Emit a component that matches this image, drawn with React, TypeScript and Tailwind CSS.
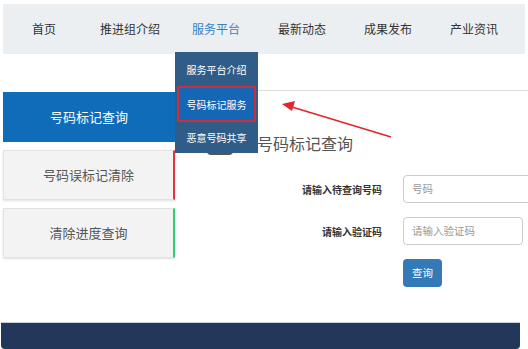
import React from "react";

const navItems = ["首页", "推进组介绍", "服务平台", "最新动态", "成果发布", "产业资讯"];

export default function App() {
  return (
    <div
      className="relative flex h-[349px] w-[528px] flex-col overflow-hidden bg-white"
      style={{ fontFamily: '"Noto Sans CJK SC", "Noto Sans", sans-serif' }}
    >
      {/* Top nav */}
      <div className="px-[3px] pt-[4px]">
        <nav className="flex h-[50px] items-center bg-[#eceff2]">
          <div className="ml-[-2px] flex">
            {navItems.map((item) => (
              <div
                key={item}
                className={`w-[86px] text-center text-[12px] ${
                  item === "服务平台" ? "text-[#3a7fc1]" : "text-[#333]"
                }`}
              >
                {item}
              </div>
            ))}
          </div>
        </nav>
      </div>

      {/* Body */}
      <div className="mt-[36px] flex">
        <aside className="ml-[3px] mt-[2px] flex w-[172px] shrink-0 flex-col gap-[8px]">
          <div className="flex h-[50px] items-center justify-center bg-[#0f6cb9] text-[13px] text-white">
            号码标记查询
          </div>
          <div className="flex h-[50px] items-center justify-center border border-r-2 border-[#e2e2e2] border-r-[#e8323f] bg-[#f3f3f3] text-[13px] text-[#555] shadow-[0_1px_2px_rgba(0,0,0,0.12)]">
            号码误标记清除
          </div>
          <div className="flex h-[50px] items-center justify-center border border-r-2 border-[#e2e2e2] border-r-[#2ecc71] bg-[#f3f3f3] text-[13px] text-[#555] shadow-[0_1px_2px_rgba(0,0,0,0.12)]">
            清除进度查询
          </div>
        </aside>

        <main className="flex-1 border-t border-[#dcdcdc] pt-[40px]">
          <div className="flex items-center pl-[32px]">
            <div className="h-[24px] w-[26px] rounded-[4px] bg-[#555]" />
            <h2 className="ml-[24px] text-[16px] leading-[24px] text-[#555]">号码标记查询</h2>
          </div>

          <div className="mt-[20px] flex flex-col gap-[14px]">
            <div className="flex items-center">
              <label className="w-[207px] shrink-0 text-right text-[10px] font-bold text-[#333]">请输入待查询号码</label>
              <div className="ml-[21px] flex h-[28px] w-[130px] shrink-0 items-center rounded-[4px] border border-[#ccc] pl-[8px] text-[10.5px] text-[#999]">
                号码
              </div>
            </div>
            <div className="flex items-center">
              <label className="w-[207px] shrink-0 text-right text-[10px] font-bold text-[#333]">请输入验证码</label>
              <div className="ml-[21px] flex h-[28px] w-[120px] shrink-0 items-center rounded-[4px] border border-[#ccc] pl-[8px] text-[10.5px] text-[#999]">
                请输入验证码
              </div>
            </div>
            <div className="flex">
              <button className="ml-[228px] h-[28px] w-[39px] shrink-0 rounded-[4px] bg-[#337ab7] text-[10.5px] text-white">
                查询
              </button>
            </div>
          </div>
        </main>
      </div>

      {/* Footer */}
      <footer className="mx-[1px] mt-auto h-[27px] w-[519px] rounded-b-[4px] border-t border-[#c9d0da] bg-[#22375a]" />

      {/* Dropdown menu */}
      <div className="absolute left-[175px] top-[52px] flex w-[83px] flex-col bg-[#2f5d87] text-[10px] text-white">
        <div className="flex h-[34px] items-center justify-center">服务平台介绍</div>
        <div className="mx-[2px] flex h-[36px] items-center justify-center border-2 border-[#c8303f] bg-[#1666b6]">
          号码标记服务
        </div>
        <div className="flex h-[31px] items-center justify-center">恶意号码共享</div>
      </div>

      {/* Red annotation arrow */}
      <svg className="absolute left-0 top-0" width="528" height="349" viewBox="0 0 528 349">
        <line x1="391" y1="137" x2="292" y2="107" stroke="#e3242b" strokeWidth="1.6" />
        <polygon points="282,104 295,101 292,111" fill="#e3242b" />
      </svg>
    </div>
  );
}
